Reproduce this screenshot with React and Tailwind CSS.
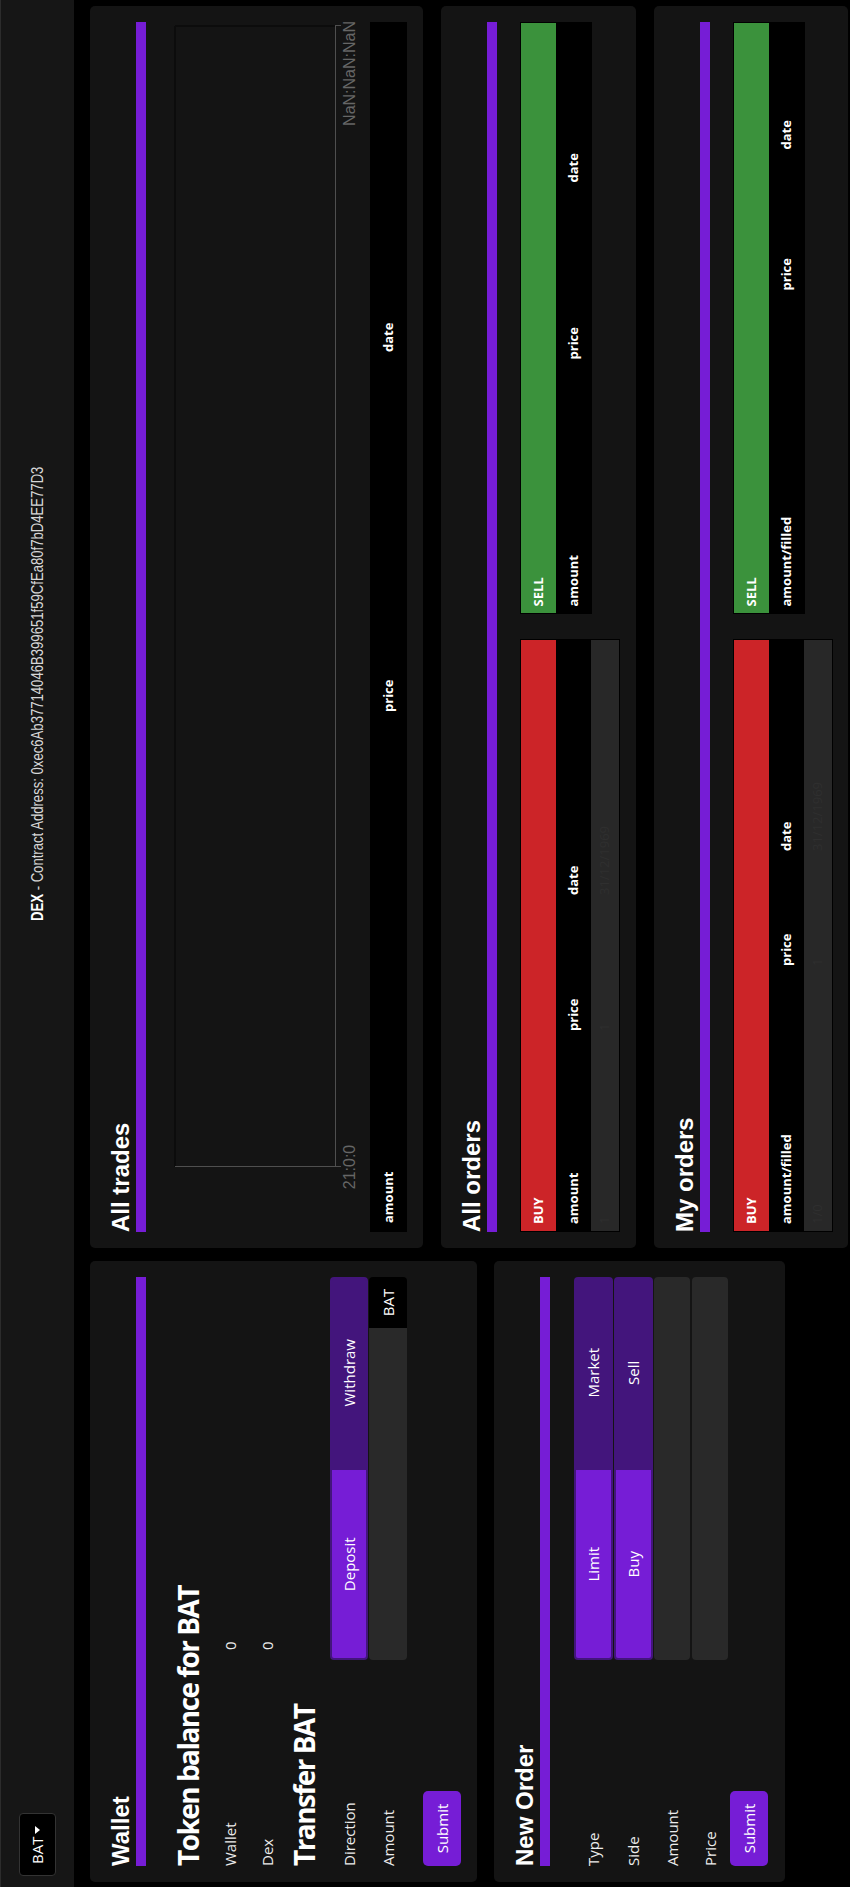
import React from 'react'

const ADDRESS = '0xec6Ab37714046B399651f59CfEa80f7bD4EE77D3'

function Panel({ title, className, children }) {
  return (
    <div className={`bg-[#141414] rounded-[5px] px-4 pt-4 ${className}`}>
      <h2 className="font-['Liberation_Sans',Arial,sans-serif] font-bold text-[24px] leading-[30px] text-white">
        {title}
      </h2>
      <div className="h-[10px] bg-[#761dd6]" />
      {children}
    </div>
  )
}

function FormRow({ label, className = '', children }) {
  return (
    <div className={`flex items-center ${className}`}>
      <span className="w-[206px] shrink-0 text-[15px] text-[#ececec]">{label}</span>
      <div className="flex-1 h-full flex">{children}</div>
    </div>
  )
}

function Toggle({ left, right }) {
  return (
    <>
      <button className="flex-1 h-full bg-[#761dd6] border-2 border-[#43157c] rounded-l-[4px] text-[15px] text-white">
        {left}
      </button>
      <button className="flex-1 h-full bg-[#43157c] border-2 border-[#43157c] rounded-r-[4px] text-[15px] text-white">
        {right}
      </button>
    </>
  )
}

function OrderTable({ side, cols, headers, row }) {
  const band = side === 'BUY' ? 'bg-[#cc2428]' : 'bg-[#3b923c]'
  return (
    <div className="flex-1 border border-black font-['Open_Sans',sans-serif] text-[13px]">
      <div className={`h-[35px] ${band} flex items-center pl-[7px] font-bold text-white`}>{side}</div>
      <div className={`h-[35px] bg-black grid ${cols} items-center font-bold text-white`}>
        {headers.map(h => (
          <span key={h} className="pl-[7px]">{h}</span>
        ))}
      </div>
      {row && (
        <div className={`h-[28px] bg-[#282828] grid ${cols} items-center text-[#2f2f2f]`}>
          {row.map((v, i) => (
            <span key={i} className="pl-[7px]">{v}</span>
          ))}
        </div>
      )}
    </div>
  )
}

function TradesChart() {
  return (
    <svg width="1210" height="224" className="block">
      <line x1="65" y1="29" x2="1206" y2="29" stroke="#0c0c0c" strokeWidth="2" />
      <line x1="1206" y1="29" x2="1206" y2="189" stroke="#0c0c0c" strokeWidth="2" />
      <line x1="65" y1="189.5" x2="1206" y2="189.5" stroke="#4f4f4f" />
      <line x1="65.5" y1="29" x2="65.5" y2="195" stroke="#4f4f4f" />
      <line x1="1206.5" y1="189" x2="1206.5" y2="195" stroke="#4f4f4f" />
      <text x="65" y="209" textAnchor="middle" fill="#666" fontSize="16" fontFamily="Liberation Sans, Arial, sans-serif">
        21:0:0
      </text>
      <text x="1211" y="209" textAnchor="end" fill="#666" fontSize="16" fontFamily="Liberation Sans, Arial, sans-serif">
        NaN:NaN:NaN
      </text>
    </svg>
  )
}

export default function App() {
  return (
    <div className="w-[850px] h-[1887px] overflow-hidden bg-black">
      <div className="w-[1887px] h-[850px] origin-top-left [transform:translateY(1887px)_rotate(-90deg)] bg-black font-['Open_Sans',sans-serif]">
        <header className="h-[74px] bg-[#161616] border-t border-[#2c2c2c] flex items-center">
          <div className="ml-[11px] w-[63px] h-[37px] bg-black border border-[#333] rounded-[4px] flex items-center pl-[11px] gap-[3px] text-[15px] text-white">
            BAT
            <svg width="8" height="5" viewBox="0 0 8 5">
              <path d="M0 0h8L4 5z" fill="white" />
            </svg>
          </div>
          {/* narrow face is not installed, so the regular face is squeezed */}
          <div className="ml-[892px] whitespace-nowrap origin-left scale-x-[0.82] font-['Liberation_Sans',Arial,sans-serif] text-[16px] text-[#d6d6d6]">
            <span className="font-bold text-white">DEX</span> - Contract Address: {ADDRESS}
          </div>
        </header>

        <div className="flex gap-[13px] pl-[5px] pt-[16px]">
          <div className="w-[621px] flex flex-col gap-[17px]">
            <Panel title="Wallet" className="h-[387px]">
              <h3 className="mt-[24px] font-bold text-[28px] leading-[36px] tracking-[-0.055em] text-white">
                Token balance for BAT
              </h3>
              <div className="mt-[6px] text-[15px] text-[#ececec]">
                <div className="h-[37px] flex items-center">
                  <span className="w-[216px]">Wallet</span>
                  <span>0</span>
                </div>
                <div className="h-[37px] flex items-center">
                  <span className="w-[216px]">Dex</span>
                  <span>0</span>
                </div>
              </div>
              <h3 className="font-bold text-[28px] leading-[36px] tracking-[-0.055em] text-white">Transfer BAT</h3>
              <FormRow label="Direction" className="mt-[8px] h-[38px]">
                <Toggle left="Deposit" right="Withdraw" />
              </FormRow>
              <FormRow label="Amount" className="mt-px h-[38px]">
                <div className="flex-1 bg-[#292929] rounded-l-[4px]" />
                <div className="w-[51px] bg-black rounded-r-[4px] flex items-center justify-center text-[15px] text-white">
                  BAT
                </div>
              </FormRow>
              <button className="mt-[16px] w-[75px] h-[38px] bg-[#761dd6] rounded-[5px] text-[15px] text-white">
                Submit
              </button>
            </Panel>

            <Panel title="New Order" className="h-[291px]">
              <FormRow label="Type" className="mt-[24px] h-[39px]">
                <Toggle left="Limit" right="Market" />
              </FormRow>
              <FormRow label="Side" className="mt-px h-[39px]">
                <Toggle left="Buy" right="Sell" />
              </FormRow>
              <FormRow label="Amount" className="mt-px h-[36px]">
                <div className="flex-1 bg-[#292929] rounded-[4px]" />
              </FormRow>
              <FormRow label="Price" className="mt-[2px] h-[36px]">
                <div className="flex-1 bg-[#292929] rounded-[4px]" />
              </FormRow>
              <button className="mt-[2px] w-[75px] h-[38px] bg-[#761dd6] rounded-[5px] text-[15px] text-white">
                Submit
              </button>
            </Panel>
          </div>

          <div className="w-[1242px] flex flex-col gap-[18px]">
            <Panel title="All trades" className="h-[333px]">
              <TradesChart />
              <div className="h-[37px] bg-black grid grid-cols-[511px_360px_1fr] items-center text-[13px] font-bold text-white">
                <span className="pl-[9px]">amount</span>
                <span className="pl-[9px]">price</span>
                <span className="pl-[9px]">date</span>
              </div>
            </Panel>

            <Panel title="All orders" className="h-[195px]">
              <div className="mt-[23px] flex items-start gap-[25px]">
                <OrderTable
                  side="BUY"
                  cols="grid-cols-[193px_136px_1fr]"
                  headers={['amount', 'price', 'date']}
                  row={['1', '1', '31/12/1969']}
                />
                <OrderTable side="SELL" cols="grid-cols-[247px_177px_1fr]" headers={['amount', 'price', 'date']} />
              </div>
            </Panel>

            <Panel title="My orders" className="h-[194px]">
              <div className="mt-[23px] flex items-start gap-[25px]">
                <OrderTable
                  side="BUY"
                  cols="grid-cols-[258px_115px_1fr]"
                  headers={['amount/filled', 'price', 'date']}
                  row={['1/0', '1', '31/12/1969']}
                />
                <OrderTable side="SELL" cols="grid-cols-[316px_141px_1fr]" headers={['amount/filled', 'price', 'date']} />
              </div>
            </Panel>
          </div>
        </div>
      </div>
    </div>
  )
}
